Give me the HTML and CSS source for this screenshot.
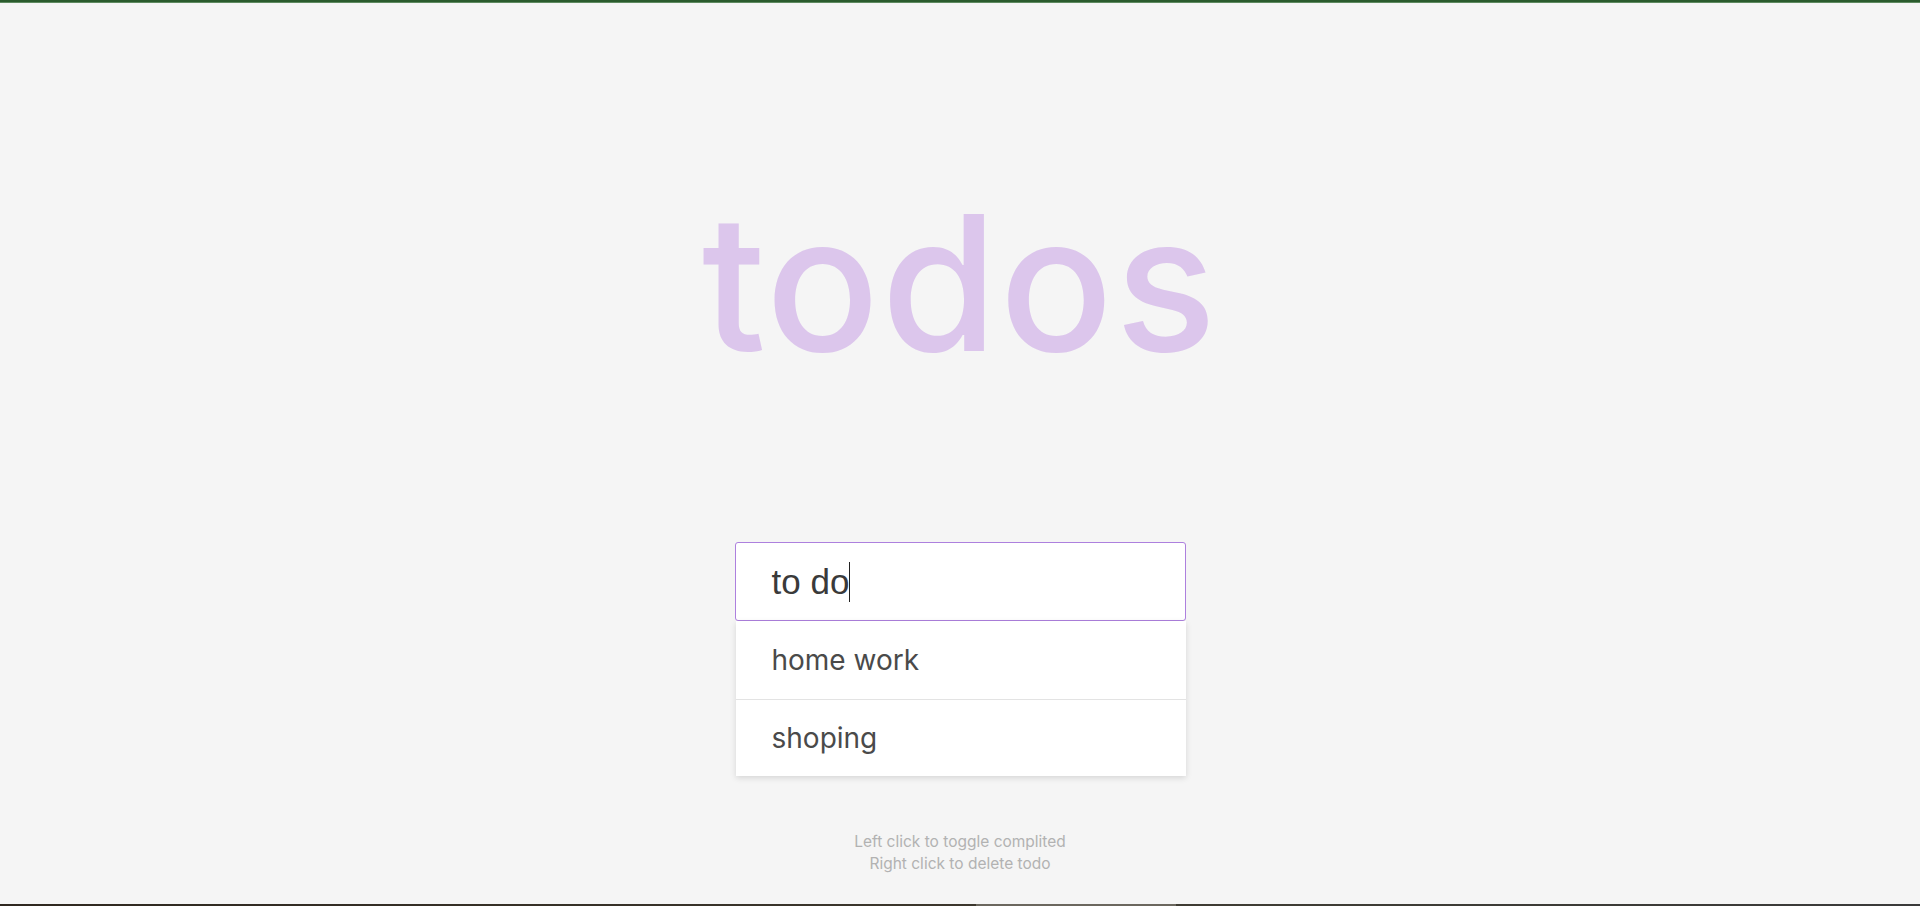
FILE: index.html
```html
<!DOCTYPE html>
<html lang="en">
<head>
<meta charset="utf-8">
<title>todos</title>
<link rel="stylesheet" href="styles.css">
</head>
<body>
<div class="topbar"></div>
<main class="app">
  <h1 class="title">todos</h1>
  <section class="todo">
    <div class="field"><span class="field-text">to do</span><span class="caret"></span></div>
    <ul class="list">
      <li class="item">home work</li>
      <li class="item">shoping</li>
    </ul>
  </section>
  <footer class="hint">
    <p>Left click to toggle complited</p>
    <p>Right click to delete todo</p>
  </footer>
</main>
<div class="taskbar"><span class="tb-left"></span><span class="tb-mid"></span><span class="tb-right"></span></div>
</body>
</html>
```

FILE: styles.css
```css
* { box-sizing: border-box; }
html, body { margin: 0; padding: 0; }
body {
  background: #f5f5f5;
  min-height: 100vh;
  display: flex;
  flex-direction: column;
  font-family: Inter, "Noto Sans", sans-serif;
}
.topbar {
  height: 3px;
  background: #2b5b2d;
  border-bottom: 1px solid #5e8a60;
}
.app {
  display: flex;
  flex-direction: column;
  align-items: center;
  padding-top: 186px;
}
.title {
  margin: 0;
  font-size: 188px;
  line-height: 1;
  height: 191px;
  font-weight: 500;
  color: #dcc6ec;
  letter-spacing: 2px;
}
.todo {
  margin-top: 162px;
  width: 451px;
}
.field {
  height: 79px;
  border: 1px solid #ad80de;
  border-radius: 3px;
  background: #fff;
  display: flex;
  align-items: center;
  padding-left: 36px;
  font-family: "Liberation Sans", Arial, sans-serif;
  font-size: 35px;
  color: #3a3a3a;
}
.caret {
  display: inline-block;
  width: 1px;
  height: 40px;
  background: #222;
}
.list {
  list-style: none;
  margin: 0 0 0 1px;
  padding: 0;
  background: #fff;
  box-shadow: 0 2px 6px rgba(0, 0, 0, 0.13);
}
.item {
  height: 78px;
  display: flex;
  align-items: center;
  padding-left: 36px;
  font-size: 28px;
  color: #4a4a4a;
}
.item + .item {
  border-top: 1px solid #e3e3e3;
  height: 77px;
}
.hint {
  margin-top: 55px;
  text-align: center;
  font-size: 15.5px;
  line-height: 22px;
  color: #b2b2b2;
}
.hint p { margin: 0; }
.taskbar {
  margin-top: auto;
  height: 2px;
  display: flex;
}
.tb-left { width: 976px; background: linear-gradient(90deg, #2f2820, #3c372d); }
.tb-mid { width: 200px; background: #6b675e; }
.tb-right { flex: 1; background: linear-gradient(90deg, #3f3c33, #3a3a3a); }
```
